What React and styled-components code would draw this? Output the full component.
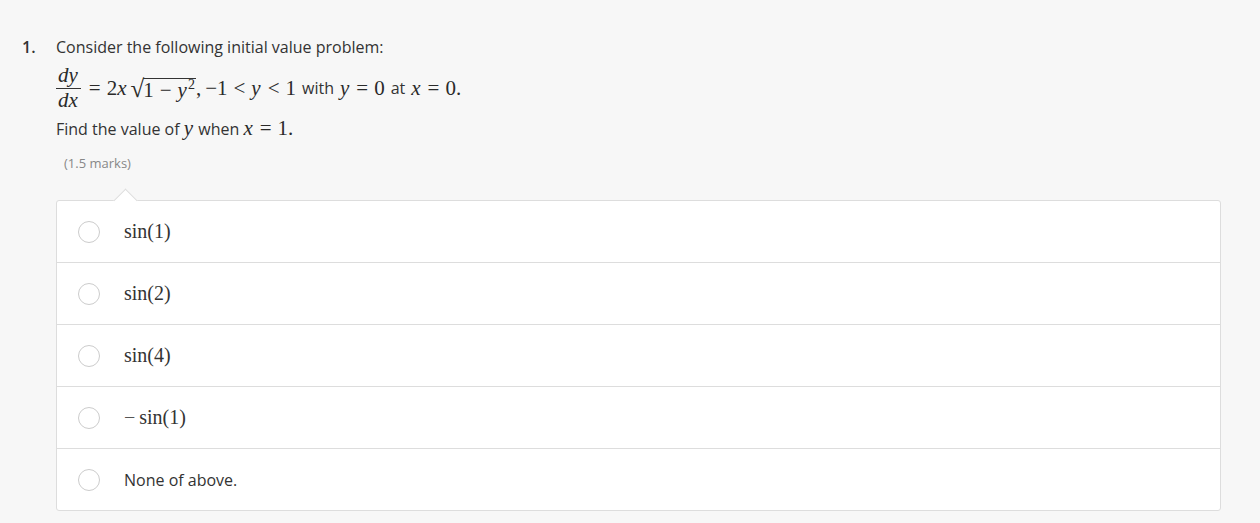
import React from 'react'
import styled, { createGlobalStyle } from 'styled-components'

const GlobalStyle = createGlobalStyle`
    html, body {
        margin: 0;
        padding: 0;
        background: #f7f7f7;
    }
    body {
        font-family: "Open Sans", "Liberation Sans", sans-serif;
        color: #333;
    }
`

const getOptions = () => [
    { key: 'a', math: true, content: <>sin(1)</> },
    { key: 'b', math: true, content: <>sin(2)</> },
    { key: 'c', math: true, content: <>sin(4)</> },
    { key: 'd', math: true, content: <><Minus>−</Minus>sin(1)</> },
    { key: 'e', math: false, content: 'None of above.' },
]

export default function App() {
    const options = getOptions()
    return (
        <>
            <GlobalStyle />
            <Page>
                <Question>
                    <Number>1.</Number>
                    <Body>
                        <Line>Consider the following initial value problem:</Line>
                        <EqLine>
                            <Tex>
                                <Frac>
                                    <Num><I>dy</I></Num>
                                    <Den><I>dx</I></Den>
                                </Frac>
                                <Op>=</Op>2<I>x</I>
                                <Sqrt>
                                    <Radical>√</Radical>
                                    <Radicand>1<Op>−</Op><I>y</I><Sup>2</Sup></Radicand>
                                </Sqrt>
                                <Comma>,</Comma>−1<Op>&lt;</Op><I>y</I><Op>&lt;</Op>1
                            </Tex>
                            <Word>with</Word>
                            <Tex><I>y</I><Op>=</Op>0</Tex>
                            <Word>at</Word>
                            <Tex><I>x</I><Op>=</Op>0.</Tex>
                        </EqLine>
                        <Line>
                            Find the value of <Tex><I>y</I></Tex> when <Tex><I>x</I><Op>=</Op>1.</Tex>
                        </Line>
                        <Marks>(1.5 marks)</Marks>
                        <Card>
                            {options.map(o => (
                                <Option key={o.key}>
                                    <Radio />
                                    <Label $math={o.math}>{o.content}</Label>
                                </Option>
                            ))}
                        </Card>
                    </Body>
                </Question>
            </Page>
        </>
    )
}

const Page = styled.div`
    padding: 36px 39px 12px 22px;
`

const Question = styled.div`
    display: flex;
`

const Number = styled.div`
    width: 34px;
    font-size: 16px;
    font-weight: 600;
    color: #333;
    line-height: 22px;
`

const Body = styled.div`
    flex: 1;
`

const Line = styled.div`
    font-size: 16px;
    line-height: 22px;
    color: #333;
`

const EqLine = styled.div`
    display: flex;
    align-items: center;
    font-size: 16px;
    height: 58px;
    margin-top: 1px;
`

const Word = styled.span`
    margin: 0 6px 0 6px;
`

const Tex = styled.span`
    font-family: "Liberation Serif", "DejaVu Serif", serif;
    font-size: 21px;
    display: inline-flex;
    align-items: center;
    color: #2a2a2a;
`

const I = styled.i`
    font-style: italic;
    padding-right: 1px;
`

const Op = styled.span`
    margin: 0 6px;
`

const Comma = styled.span`
    margin-right: 4px;
`

const Minus = styled.span`
    margin-right: 4px;
    color: #555;
`

const Sup = styled.sup`
    font-size: 14px;
    vertical-align: 8px;
    line-height: 0;
`

const Frac = styled.span`
    display: inline-flex;
    flex-direction: column;
    align-items: center;
    margin-right: 2px;
`

const Num = styled.span`
    padding: 0 2px 2px;
    border-bottom: 1px solid #333;
    line-height: 21px;
`

const Den = styled.span`
    padding-top: 1px;
    line-height: 21px;
`

const Sqrt = styled.span`
    display: inline-flex;
    align-items: flex-end;
    margin-left: 3px;
`

const Radical = styled.span`
    font-size: 25px;
    line-height: 25px;
`

const Radicand = styled.span`
    border-top: 1px solid #333;
    line-height: 22px;
    padding-right: 1px;
    margin-left: -1px;
`

const Marks = styled.div`
    font-size: 13px;
    color: #888;
    margin: 14px 0 0 8px;
    line-height: 18px;
`

const Card = styled.div`
    position: relative;
    margin-top: 28px;
    background: #fff;
    border: 1px solid #ddd;
    border-radius: 3px;
    &::before {
        content: '';
        position: absolute;
        top: -9px;
        left: 60px;
        width: 16px;
        height: 16px;
        background: #fff;
        border-top: 1px solid #ddd;
        border-left: 1px solid #ddd;
        transform: rotate(45deg);
    }
`

const Option = styled.div`
    display: flex;
    align-items: center;
    height: 61px;
    padding-left: 21px;
    & + & {
        border-top: 1px solid #ddd;
    }
`

const Radio = styled.span`
    width: 20px;
    height: 20px;
    border: 1px solid #ccc;
    border-radius: 50%;
    background: #fff;
    margin-right: 24px;
    flex-shrink: 0;
`

const Label = styled.span`
    font-family: ${({ $math }) => $math ? '"Liberation Serif", "DejaVu Serif", serif' : '"Open Sans", "Liberation Sans", sans-serif'};
    font-size: ${({ $math }) => $math ? '20px' : '16px'};
    color: #333;
    display: inline-flex;
    align-items: center;
`
